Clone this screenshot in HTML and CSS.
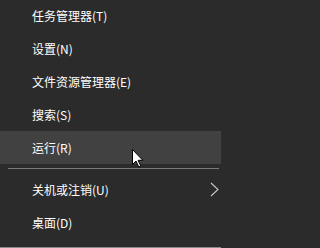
FILE: index.html
```html
<!DOCTYPE html>
<html lang="zh-CN">
<head>
<meta charset="utf-8">
<title>Win+X 菜单</title>
<link rel="stylesheet" href="styles.css">
</head>
<body>
<div class="menu">
  <ul class="group">
    <li class="item">任务管理器(T)</li>
    <li class="item">设置(N)</li>
    <li class="item">文件资源管理器(E)</li>
    <li class="item">搜索(S)</li>
    <li class="item hover">运行(R)</li>
  </ul>
  <div class="sep"></div>
  <ul class="group">
    <li class="item submenu">
      <span>关机或注销(U)</span>
      <svg class="chevron" width="9" height="15" viewBox="0 0 9 15"><polyline points="1,1 8,7.5 1,14" fill="none" stroke="#c8c8c8" stroke-width="1.1"/></svg>
    </li>
    <li class="item">桌面(D)</li>
  </ul>
</div>
<svg class="cursor" width="12" height="19" viewBox="0 0 12 19"><path d="M0.5 0.5 L0.5 15.5 L4 12 L6.8 18 L8.8 17.1 L6.1 11.3 L10.8 11.3 Z" fill="#fff" stroke="#000" stroke-width="1" stroke-linejoin="miter"/></svg>
</body>
</html>
```

FILE: styles.css
```css
html {
  margin: 0;
  background: #2b2b2b;
}
body {
  margin: 0;
  width: 221px;
  height: 248px;
  box-sizing: border-box;
  border-bottom: 1px solid #8a8a8a;
  background: #2b2b2b;
  overflow: hidden;
  position: relative;
  font-family: "Noto Sans CJK SC", "Microsoft YaHei", sans-serif;
  font-size: 12px;
  color: #ffffff;
}
.menu {
  margin-top: -1px;
}
.group {
  list-style: none;
  margin: 0;
  padding: 0;
}
.item {
  height: 33px;
  line-height: 33px;
  padding-left: 32px;
  padding-right: 2px;
  white-space: nowrap;
}
.item.hover {
  background: #414141;
}
.submenu {
  display: flex;
  align-items: center;
  justify-content: space-between;
}
.chevron {
  display: block;
}
.sep {
  height: 1px;
  margin: 4px 2px 4px 8px;
  background: #7a7a7a;
}
.cursor {
  position: absolute;
  left: 132px;
  top: 149px;
}
```
